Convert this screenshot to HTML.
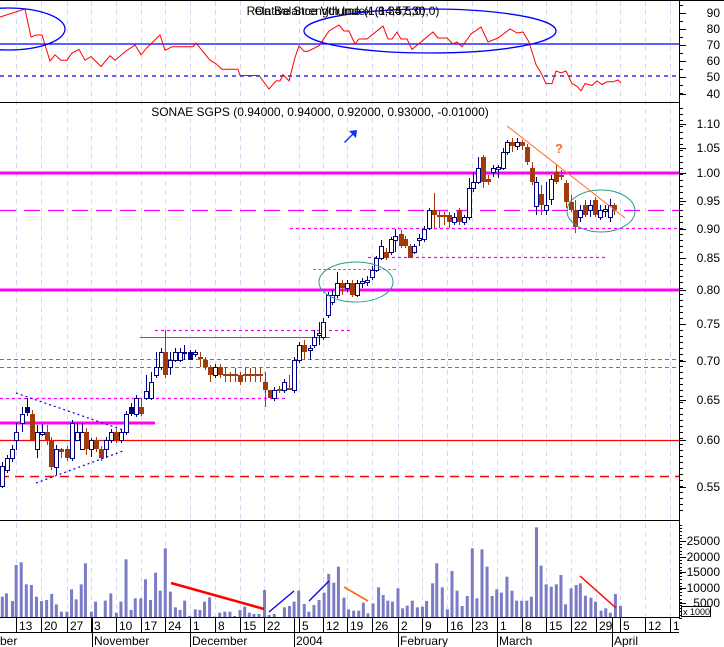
<!DOCTYPE html>
<html><head><meta charset="utf-8"><style>
html,body{margin:0;padding:0;background:#fff;width:724px;height:647px;overflow:hidden}
svg{display:block;font-family:"Liberation Sans",sans-serif}
</style></head><body>
<svg id="s" width="724" height="647" viewBox="0 0 724 647" xmlns="http://www.w3.org/2000/svg">
<rect width="724" height="647" fill="#fff"/>
<g id="grid"></g>
<line x1="0" y1="44" x2="679" y2="44" stroke="#0000ff" stroke-width="1.3"/>
<line x1="0" y1="76" x2="679" y2="76" stroke="#0000ff" stroke-width="1.3" stroke-dasharray="4,4"/>
<polyline id="rsi" fill="none" stroke="#ff0000" stroke-width="1"/>
<ellipse cx="8" cy="29" rx="57" ry="21" fill="none" stroke="#0000ff" stroke-width="1.3"/>
<ellipse cx="430" cy="31" rx="126" ry="22" fill="none" stroke="#0000ff" stroke-width="1.3"/>
<text x="340" y="15" font-size="12" text-anchor="middle" fill="#000">On Balance Volume (1,8,34,5,0)</text>
<text x="343" y="15" font-size="12" text-anchor="middle" fill="#000">Relative Strength Index (14,57,30,0)</text>
<line x1="0" y1="173" x2="679" y2="173" stroke="#ff00ff" stroke-width="3"/>
<line x1="0" y1="290" x2="679" y2="290" stroke="#ff00ff" stroke-width="3"/>
<line x1="0" y1="210.5" x2="679" y2="210.5" stroke="#ff00ff" stroke-width="1.2" stroke-dasharray="16,8"/>
<line x1="290" y1="228.5" x2="679" y2="228.5" stroke="#ff00ff" stroke-width="1.2" stroke-dasharray="3,3"/>
<line x1="368" y1="257.5" x2="605" y2="257.5" stroke="#ff00ff" stroke-width="1.2" stroke-dasharray="3,3"/>
<line x1="313" y1="269.5" x2="398" y2="269.5" stroke="#ff6a1a" stroke-width="1" stroke-dasharray="3,2"/>
<line x1="155" y1="330.5" x2="350" y2="330.5" stroke="#ff00ff" stroke-width="1.2" stroke-dasharray="3,3"/>
<line x1="140" y1="337.5" x2="330" y2="337.5" stroke="#ff00ff" stroke-width="1"/>
<line x1="0" y1="359.5" x2="679" y2="359.5" stroke="#7070a8" stroke-width="1" stroke-dasharray="4,3"/>
<line x1="0" y1="367.5" x2="679" y2="367.5" stroke="#7070a8" stroke-width="1" stroke-dasharray="4,3"/>
<line x1="0" y1="398.5" x2="287" y2="398.5" stroke="#ff00ff" stroke-width="1.2" stroke-dasharray="3,3"/>
<line x1="0" y1="423" x2="155" y2="423" stroke="#ff00ff" stroke-width="3"/>
<line x1="0" y1="440.5" x2="679" y2="440.5" stroke="#ff0000" stroke-width="1.3"/>
<line x1="0" y1="476.5" x2="679" y2="476.5" stroke="#ff0000" stroke-width="1.5" stroke-dasharray="9,6"/>
<line x1="16" y1="393" x2="123" y2="430" stroke="#0000ff" stroke-width="1.2" stroke-dasharray="2,3"/>
<line x1="36" y1="483" x2="123" y2="451" stroke="#0000ff" stroke-width="1.2" stroke-dasharray="2,3"/>
<g id="candles"></g>
<ellipse cx="356" cy="282" rx="37" ry="20" fill="none" stroke="#2e9a8a" stroke-width="1"/>
<ellipse cx="601" cy="211" rx="34" ry="21" fill="none" stroke="#2e9a8a" stroke-width="1"/>
<line x1="507" y1="126" x2="625" y2="218" stroke="#ff6a1a" stroke-width="1"/>
<text x="559" y="153" font-size="13" font-weight="bold" fill="#ff6a1a" text-anchor="middle">?</text>
<polygon points="344,142 352,134 349,131 357,130 356,138 353,135 345,143" fill="#1030ff"/>
<text x="320" y="116" font-size="12" text-anchor="middle" fill="#000">SONAE SGPS (0.94000, 0.94000, 0.92000, 0.93000, -0.01000)</text>
<g id="vol"></g>
<line x1="171" y1="583" x2="264" y2="609" stroke="#ff0000" stroke-width="2.5"/>
<line x1="269" y1="612" x2="294" y2="591" stroke="#0000ff" stroke-width="1.3"/>
<line x1="309" y1="601" x2="329" y2="581" stroke="#0000ff" stroke-width="1.3"/>
<line x1="344" y1="587" x2="368" y2="601" stroke="#ff6a1a" stroke-width="1.8"/>
<line x1="580" y1="576" x2="616" y2="608" stroke="#ff0000" stroke-width="1.5"/>
<line x1="0" y1="0.5" x2="724" y2="0.5" stroke="#000"/>
<line x1="0" y1="102.5" x2="679" y2="102.5" stroke="#000"/>
<line x1="0" y1="520.5" x2="679" y2="520.5" stroke="#000"/>
<line x1="0" y1="617.5" x2="679" y2="617.5" stroke="#000"/>
<line x1="0" y1="632.5" x2="679" y2="632.5" stroke="#000"/>
<line x1="679.5" y1="0" x2="679.5" y2="618" stroke="#000"/>
<g id="axis" font-size="12" fill="#000"></g>
<rect x="681.5" y="606.5" width="29" height="10" fill="#fff" stroke="#000" stroke-width="1"/>
<text x="683" y="615" font-size="9" fill="#000">x 1000</text>
</svg>
<script>
var NS="http://www.w3.org/2000/svg";
function el(p,t,a,txt){var e=document.createElementNS(NS,t);for(var k in a)e.setAttribute(k,a[k]);if(txt!=null)e.textContent=txt;document.getElementById(p).appendChild(e);return e;}
var wk=[16,41,67,91,116,141,165,190,215,240,264,299,323,347,372,398,422,447,472,497,522,546,571,596,620,645,670];
var wl=["13","20","27","3","10","17","24","1","8","15","22","5","12","19","26","2","9","16","23","1","8","15","22","29","5","12","1"];
wk.forEach(function(x){el("grid","line",{x1:x+.5,y1:1,x2:x+.5,y2:617,stroke:"#d8d8f0","stroke-width":1,"stroke-dasharray":"5,4"});});
var r=[[0,15],[25,7],[31,35],[36,33],[42,33],[50,61],[55,54],[61,60],[67,60],[72,52],[79,48],[85,60],[91,56],[101,67],[110,55],[115,60],[127,49],[135,43],[141,54],[147,46],[160,33],[165,49],[172,45],[193,45],[196,41],[210,60],[216,64],[222,70],[238,70],[240,77],[259,77],[269,92],[276,83],[280,83],[283,76],[289,83],[295,57],[299,44],[304,50],[308,50],[319,44],[329,29],[339,23],[344,29],[349,29],[355,42],[359,37],[367,37],[383,24],[388,37],[392,37],[397,30],[401,37],[407,37],[412,48],[433,30],[438,36],[447,36],[453,42],[457,40],[462,45],[471,32],[481,25],[488,40],[498,36],[510,27],[517,31],[523,30],[529,40],[536,65],[541,74],[546,86],[552,86],[556,72],[561,74],[566,72],[572,86],[577,89],[581,94],[585,86],[592,88],[597,83],[602,87],[607,84],[613,84],[618,82],[621,85]];
document.getElementById("rsi").setAttribute("points",r.map(function(p){var y=p[1]+2;if(y>44)y=44+(y-44)*0.9;return p[0]+","+y.toFixed(1)}).join(" "));
var C=[[2,466,486,'h',462,488],[7,458,470,'h'],[12,449,458,'h',445,462],[16,432,440,'h',423,450],[22,414,423,'h',407,432],[27,407,413,'n',398,416],[32,414,440,'b',410,440],[37,432,449,'h',425,458],[42,432,434,'h',424,436],[47,432,440,'b',425,445],[51,440,467,'b'],[56,449,467,'h',445,475],[61,449,452,'b',448,458],[67,449,458,'b'],[72,423,458,'h'],[77,432,440,'h',423,440],[82,432,449,'h',423,449],[86,432,449,'b',428,455],[91,440,449,'h',438,457],[96,440,449,'b'],[101,449,458,'b'],[106,440,449,'h',437,458],[111,432,440,'h'],[116,432,440,'b'],[121,432,440,'h'],[126,414,432,'h'],[131,407,414,'n',403,416],[136,398,414,'h'],[141,407,414,'b',398,416],[146,391,398,'h',375,400],[151,382,398,'h',372,400],[156,367,375,'h',352,378],[161,352,367,'h',348,370],[165,352,375,'b',330,378],[170,360,367,'h',352,375],[175,352,360,'h',348,362],[180,352,360,'h',348,362],[184,352,353,'h',345,360],[190,352,360,'n',350,360],[195,352,354,'h',350,357],[200,357,359,'b',352,367],[205,360,367,'b'],[210,367,375,'b',365,382],[215,367,375,'h'],[220,367,375,'b'],[225,374,376,'b',367,382],[230,374,376,'b',372,382],[235,374,376,'b',368,382],[240,375,382,'b',372,385],[245,374,376,'b',368,382],[250,374,376,'b',368,382],[255,374,376,'b',368,382],[260,374,376,'b',368,382],[265,382,390,'b',372,407],[270,390,398,'b',390,398],[274,390,398,'h'],[279,389,391,'b',386,393],[284,382,390,'h'],[289,388,390,'b',375,390],[294,360,390,'h'],[299,345,360,'h'],[304,345,352,'b',340,360],[310,348,350,'h',345,360],[314,337,345,'h',330,348],[319,333,335,'h',322,345],[323,322,337,'h',318,340],[328,295,315,'h',292,318],[332,295,302,'h',290,305],[337,283,295,'h',272,298],[342,283,288,'b',280,295],[347,283,288,'h',280,292],[352,283,295,'b',280,297],[357,283,295,'h',280,297],[362,281,283,'h',278,288],[367,280,282,'h',276,286],[372,270,277,'h',266,280],[376,258,270,'h',256,272],[381,246,258,'h',240,260],[386,252,258,'b',248,260],[391,239,252,'h',237,255],[395,236,240,'h',229,252],[401,234,246,'b',230,248],[405,239,246,'b',236,248],[410,246,258,'b',244,258],[414,246,252,'h',244,254],[419,238,240,'h',234,246],[424,229,239,'h',226,242],[429,210,228,'h',208,230],[434,210,215,'b',193,228],[439,215,217,'b',210,228],[444,215,217,'b',212,225],[449,215,222,'b',212,228],[454,217,222,'h',213,225],[459,210,222,'b',208,225],[464,217,222,'h',215,225],[469,188,217,'h',178,220],[473,182,188,'h',172,192],[478,168,182,'h',157,184],[483,157,182,'b',155,188],[488,179,182,'b',175,185],[493,168,172,'h',165,177],[498,167,169,'h',165,178],[503,152,168,'h',148,170],[507,142,152,'h',140,155],[512,142,146,'b',138,152],[517,142,146,'h',138,150],[522,142,146,'b',140,150],[527,147,162,'b',144,165],[532,168,182,'b',162,185],[536,182,206,'h',177,215],[541,194,205,'b',185,215],[546,205,210,'h',182,215],[551,179,199,'h',175,205],[556,172,182,'b',165,184],[561,175,177,'b',170,180],[566,183,202,'b',180,208],[571,202,210,'b',195,212],[575,210,227,'b',200,233],[580,210,217,'h',205,222],[585,205,215,'b',200,217],[590,205,210,'h',200,217],[595,200,215,'b',197,217],[600,210,217,'h',205,220],[605,209,211,'h',205,217],[610,205,217,'h',199,222],[614,205,210,'b',203,215]];
C.forEach(function(c){var x=c[0],t=c[1],b=c[2],ty=c[3],wt=c[4]!=null?c[4]:t-3,wb=c[5]!=null?c[5]:b+3;
var col=ty=='b'?"#a33a0c":"#000080";
el("candles","line",{x1:x+.5,y1:wt,x2:x+.5,y2:wb,stroke:col,"stroke-width":1});
if(ty=='h')el("candles","rect",{x:x-1.5,y:t+.5,width:4,height:Math.max(b-t,1),fill:"#fff",stroke:col,"stroke-width":1});
else el("candles","rect",{x:x-2,y:t,width:5,height:Math.max(b-t,2),fill:col});});
var V=[[5,230],[14,220],[27,243],[35,135],[46,127],[57,193],[68,195],[79,230],[90,243],[101,240],[112,222],[122,253],[133,275],[145,275],[155,208],[165,238],[176,193],[185,130],[198,275],[207,245],[228,242],[240,220],[252,278],[262,245],[273,118],[284,270],[293,235],[305,235],[315,178],[326,240],[337,158],[347,212],[358,85],[369,215],[380,262],[390,270],[400,242],[411,288],[423,268],[433,270],[443,245],[454,232],[465,290],[476,278],[487,275],[498,275],[508,288],[520,270],[530,260],[540,278],[550,282],[561,282],[573,210],[583,285],[594,282],[616,262],[627,258],[637,245],[647,212],[659,252],[669,275],[680,255],[691,240],[702,218],[712,162],[723,188],[733,140],[745,233],[755,268],[766,272],[777,272],[787,248],[797,280],[808,250],[820,202],[830,225],[840,242],[850,245],[862,205],[872,265],[882,257],[893,242],[904,262],[915,260],[924,243],[937,190],[946,130],[958,202],[969,268],[979,153],[990,212],[1001,258],[1012,228],[1023,85],[1033,235],[1044,88],[1055,140],[1066,228],[1076,208],[1086,218],[1098,170],[1109,212],[1119,242],[1130,242],[1141,242],[1151,230],[1162,22],[1172,137],[1183,193],[1194,200],[1205,193],[1215,165],[1225,253],[1237,205],[1248,195],[1257,190],[1268,227],[1280,233],[1290,245],[1302,272],[1312,265],[1322,278],[1333,222],[1344,258]];
V.forEach(function(v){var x=v[0]/2.166,y=520+v[1]/3;el("vol","rect",{x:x-1.5,y:y,width:3,height:618-y,fill:"#7b7bc6"});});
function lab(y,t){el("axis","text",{x:720,y:y+4,"text-anchor":"end"},t);el("axis","line",{x1:679,y1:y+.5,x2:686,y2:y+.5,stroke:"#000"});}
[[13,"90"],[29,"80"],[45,"70"],[61,"60"],[77,"50"],[94,"40"]].forEach(function(a){lab(a[0],a[1]);});
[[124,"1.10"],[148,"1.05"],[173,"1.00"],[201,"0.95"],[229,"0.90"],[258,"0.85"],[290,"0.80"],[324,"0.75"],[361,"0.70"],[400,"0.65"],[440,"0.60"],[487,"0.55"]].forEach(function(a){lab(a[0],a[1]);});
[[541,"25000"],[557,"20000"],[572,"15000"],[588,"10000"],[603,"5000"]].forEach(function(a){lab(a[0],a[1]);});
for(var y=5;y<100;y+=8)el("axis","line",{x1:679,y1:y+.5,x2:683,y2:y+.5,stroke:"#000"});
for(var y=108;y<515;y+=6)el("axis","line",{x1:679,y1:y+.5,x2:683,y2:y+.5,stroke:"#000"});
for(var y=525;y<618;y+=3.2)el("axis","line",{x1:679,y1:Math.round(y)+.5,x2:682,y2:Math.round(y)+.5,stroke:"#000"});
wk.forEach(function(x,i){el("axis","line",{x1:x+.5,y1:618,x2:x+.5,y2:633,stroke:"#000"});el("axis","text",{x:x+3,y:630},wl[i]);});
el("axis","line",{x1:294.5,y1:618,x2:294.5,y2:633,stroke:"#000"});
[[92,"November"],[190,"December"],[294,"2004"],[398,"February"],[497,"March"],[612,"April"]].forEach(function(m){el("axis","line",{x1:m[0]+.5,y1:618,x2:m[0]+.5,y2:647,stroke:"#000"});el("axis","text",{x:m[0]+2,y:645},m[1]);});
el("axis","text",{x:0,y:645},"ber");
</script>
</body></html>
